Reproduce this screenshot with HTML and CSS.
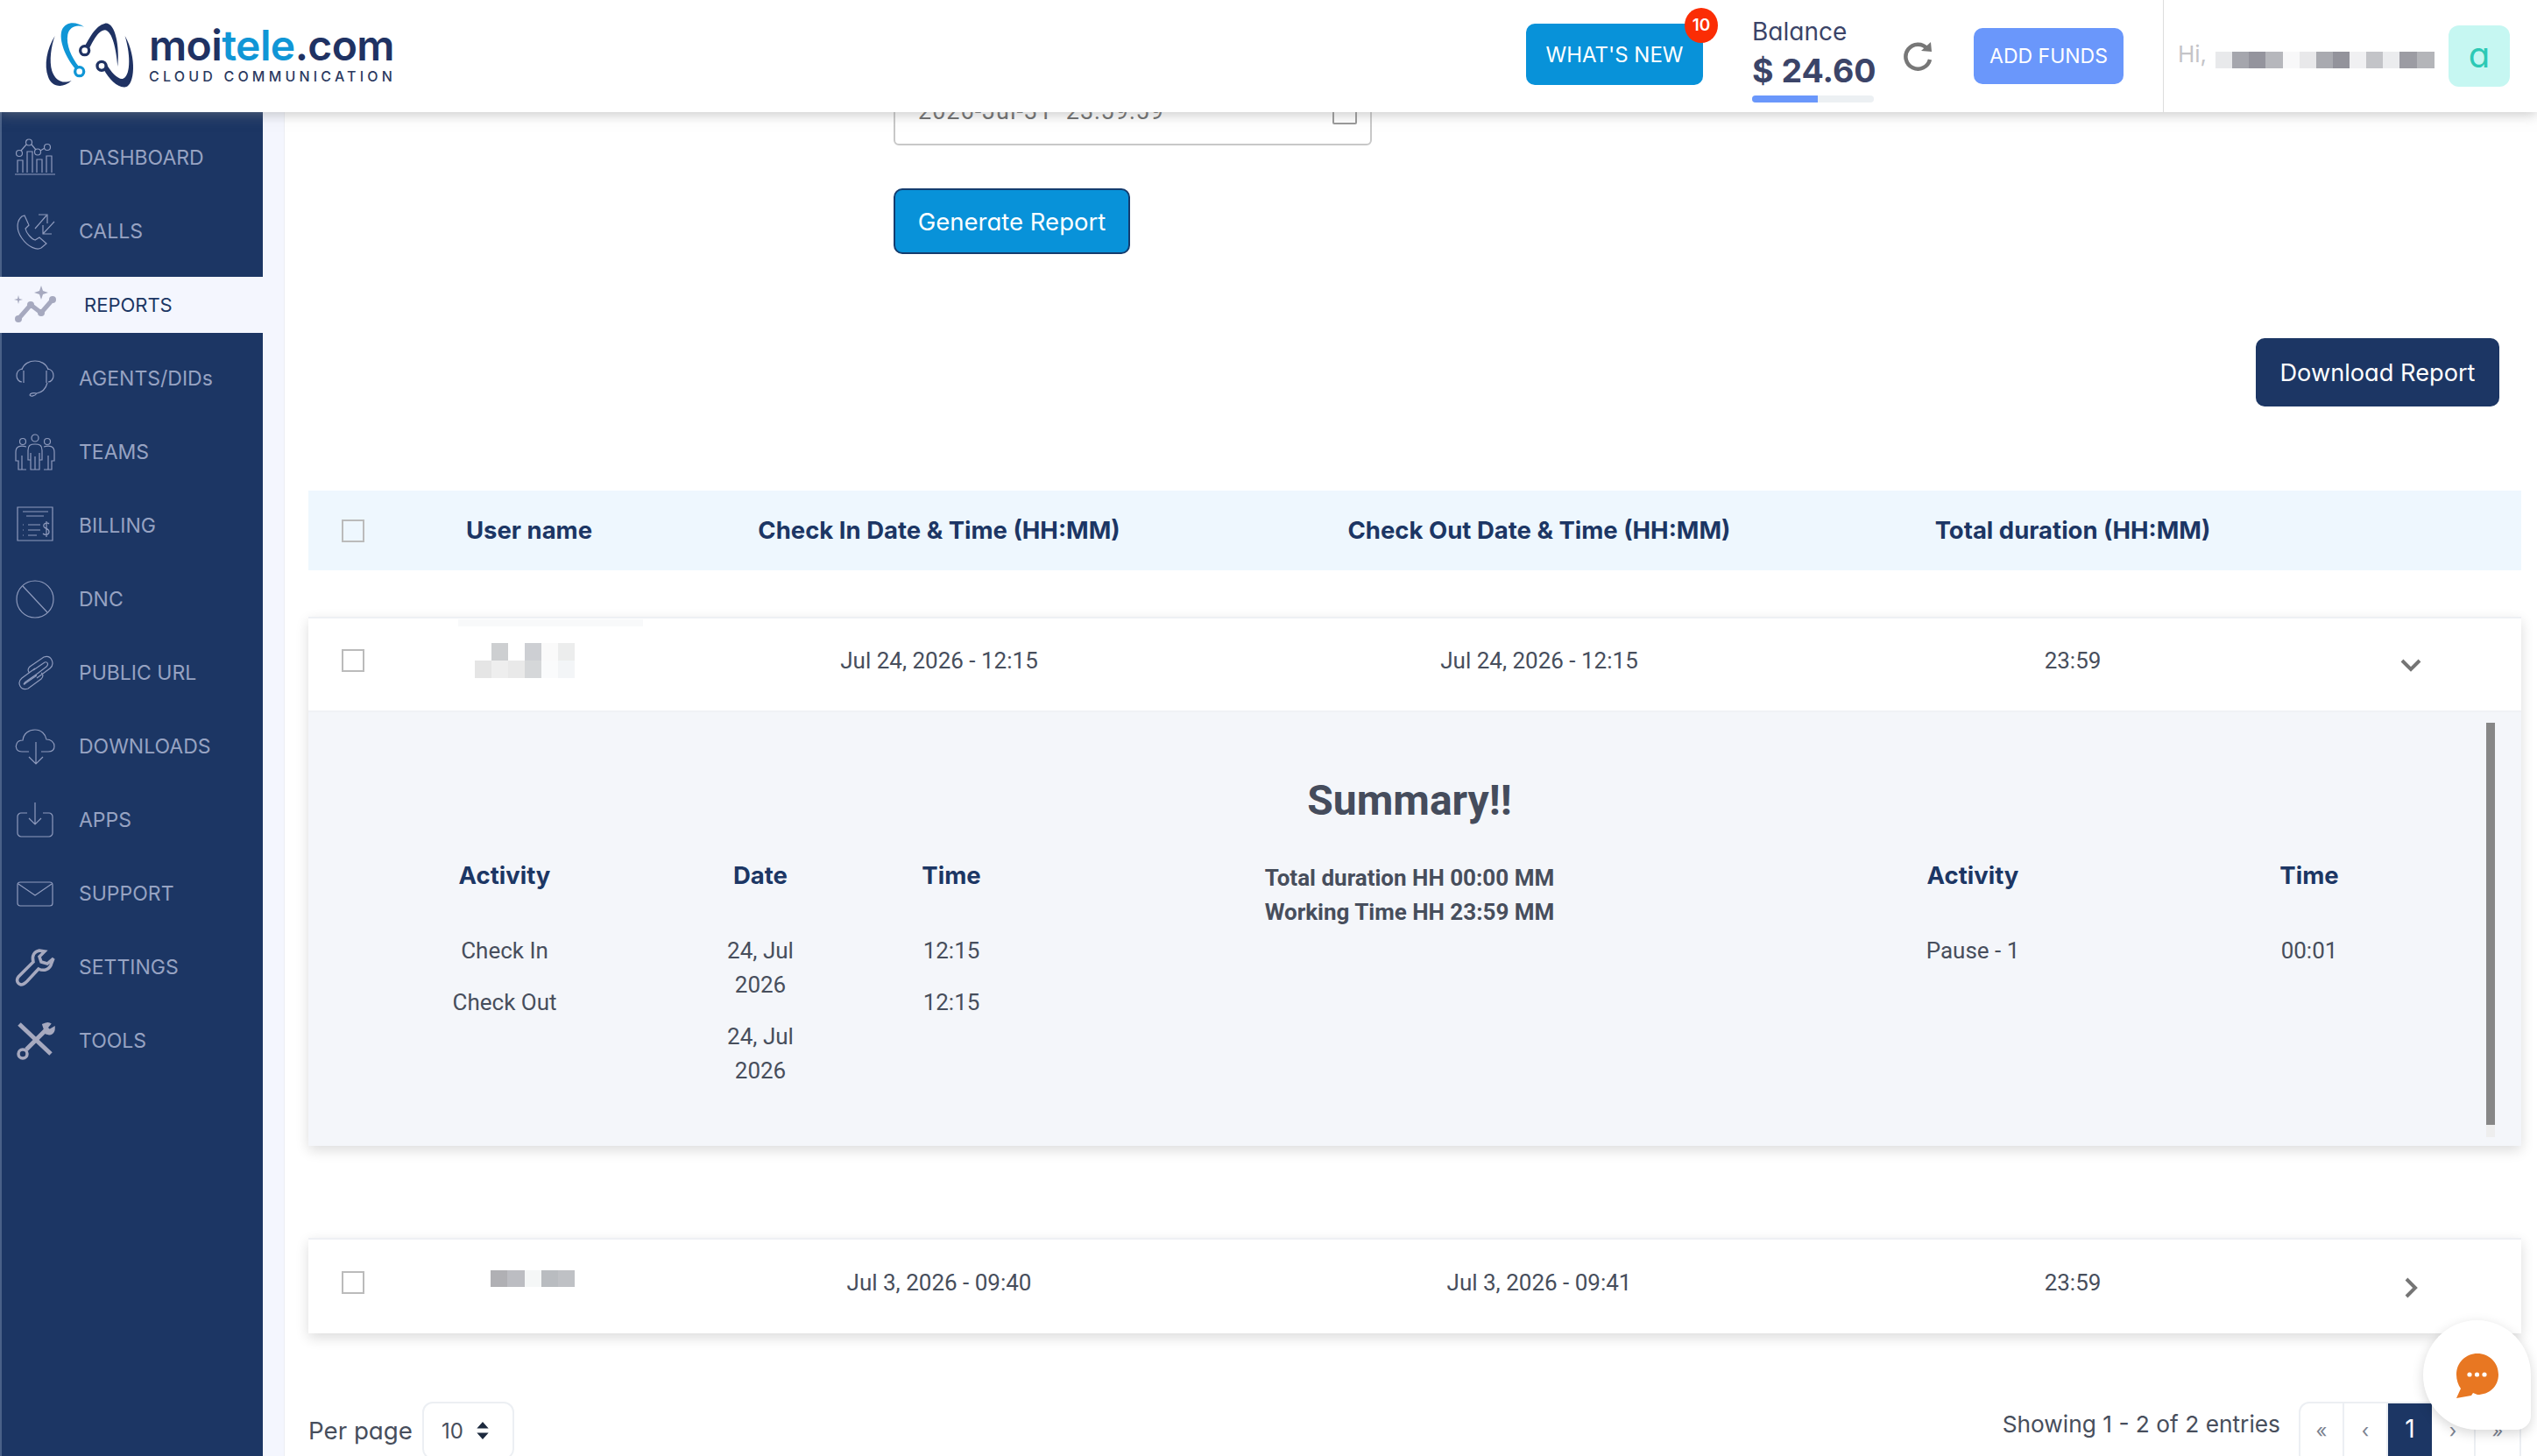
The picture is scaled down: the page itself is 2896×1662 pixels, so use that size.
FILE: index.html
```html
<!DOCTYPE html>
<html lang="en">
<head>
    <meta charset="UTF-8">
    <title>Moitele Reports</title>
    <link rel="stylesheet" href="styles.css">
</head>
<body>
    <header class="topbar">
        <div class="logo">
            <svg class="logo-mark" viewBox="0 0 390 300">
                <path class="navy" d="M68 75C40 120 30 175 45 215C55 245 90 260 125 228C95 240 70 230 58 195C48 160 55 110 68 75Z"/>
                <path class="blue" d="M168 44C140 25 105 25 92 55C80 90 105 150 140 190L150 180C125 150 105 105 112 70C118 45 140 35 168 44Z"/>
                <circle class="ring-blue" cx="152" cy="197" r="15"/>
                <path class="navy" d="M165 120C185 85 205 40 240 32C275 28 290 110 283 180C278 120 265 60 240 55C215 55 195 100 180 130Z"/>
                <circle class="ring-navy" cx="170" cy="125" r="15"/>
                <path class="navy" d="M235 190C255 225 285 255 310 250C340 245 350 150 308 75C330 150 325 215 300 222C285 225 260 200 245 172Z"/>
                <circle class="ring-navy" cx="228" cy="178" r="15"/>
            </svg>
            <div class="logo-text">
                <div class="logo-name">moi<span>tele</span>.com</div>
                <div class="logo-sub">CLOUD COMMUNICATION</div>
            </div>
        </div>
        <button class="btn-new">WHAT'S NEW<span class="badge">10</span></button>
        <div class="balance">
            <div class="balance-label">Balance</div>
            <div class="balance-value">$ 24.60</div>
            <div class="balance-bar"><div class="balance-fill"></div></div>
        </div>
        <svg class="refresh" viewBox="0 0 34 34">
            <path d="M27 8.5A14 14 0 1 0 30 21"/>
            <path class="refresh-head" d="M20 11L32 12L31 1Z"/>
        </svg>
        <button class="btn-funds">ADD FUNDS</button>
        <div class="user">
            <span class="hi">Hi,</span>
            <span class="blur-top"></span>
            <span class="avatar">a</span>
        </div>
    </header>

    <div class="layout">
        <aside class="sidebar">
            <nav class="nav">
                <a class="nav-item">
                    <svg viewBox="0 0 48 44"><path d="M1 41H47M4 39V25H10V39M15 39V15H21V39M26 39V24H32V39M37 39V20H43V39M8 14L14 7M20 7L25 13M30 14L35 11"/><circle cx="6" cy="17" r="3.5"/><circle cx="17" cy="4.5" r="3.5"/><circle cx="27" cy="15.5" r="3.5"/><circle cx="38" cy="10" r="3.5"/></svg>
                    DASHBOARD
                </a>
                <a class="nav-item">
                    <svg viewBox="0 0 48 44"><path d="M9 5C3 10 2 20 9 30C16 40 26 44 31 41L37 36L29 29L24 32C20 31 14 24 13 19L17 15L12 4Z"/><path d="M24 19L37 4M28 3H38V13M46 11L33 25M33 15V25H43"/></svg>
                    CALLS
                </a>
                <a class="nav-item active">
                    <svg class="solid" viewBox="0 0 48 44"><path class="thick" d="M5 38L19 22L31 31L44 16"/><circle cx="5" cy="38" r="4"/><circle cx="19" cy="22" r="4"/><circle cx="31" cy="31" r="4"/><circle cx="44" cy="16" r="4"/><path d="M31 0L33 6L39 8L33 10L31 16L29 10L23 8L29 6ZM5 11L6 15L10 16L6 17L5 21L4 17L0 16L4 15Z"/></svg>
                    REPORTS
                </a>
                <a class="nav-item">
                    <svg viewBox="0 0 48 44"><path d="M9 12C11 5 18 2 24 2C30 2 37 5 39 12M11 13V27M9 11C5 12 3 15 3 19C3 23 6 26 9 26M37 13V27M39 11C43 12 45 15 45 19C45 23 42 26 39 26M38 27C36 35 31 38 26 39C22 38 18 39 18 41C19 43 24 42 26 39"/></svg>
                    AGENTS/DIDs
                </a>
                <a class="nav-item">
                    <svg viewBox="0 0 48 44"><circle cx="24" cy="6" r="4"/><circle cx="10" cy="10" r="3.5"/><circle cx="38" cy="10" r="3.5"/><path d="M16 20C16 14 19 13 24 13C29 13 32 14 32 20V31H29V42H19V31H16ZM24 27V42M14 16C8 14 2 15 2 22V32H5V42H14M34 16C40 14 46 15 46 22V32H43V42H34M9 26V42M39 26V42M19 23V31M29 23V31"/></svg>
                    TEAMS
                </a>
                <a class="nav-item">
                    <svg viewBox="0 0 48 44"><path d="M4 1H44V39H4ZM10 6H39M14 11H34M16 21H30M16 27H30M16 33H26M10 21H11M10 27H11M10 33H11M40 20C38 18 33 19 34 23C35 26 40 25 40 29C40 33 35 33 33 31M37 17V35"/></svg>
                    BILLING
                </a>
                <a class="nav-item">
                    <svg viewBox="0 0 48 44"><circle cx="24" cy="22" r="21"/><path d="M10 7L38 37"/></svg>
                    DNC
                </a>
                <a class="nav-item">
                    <svg viewBox="0 0 48 44"><path d="M24 25L37 15C40 12 38 9 35 10L22 19M26 28L41 17C47 12 43 1 34 4L18 15C15 18 16 21 18 22M24 17L9 28C3 33 7 43 16 40L31 29C34 26 33 23 31 22M26 25L13 34C10 37 11 33 15 31L28 22"/></svg>
                    PUBLIC URL
                </a>
                <a class="nav-item">
                    <svg viewBox="0 0 48 44"><path d="M17 28H9C3 28 1 23 3 19C4 16 7 15 10 15C11 7 17 3 24 3C31 3 36 8 37 14C42 14 46 17 46 22C46 26 43 28 39 28H31M25 17V42M17 34L25 42L33 34"/></svg>
                    DOWNLOADS
                </a>
                <a class="nav-item">
                    <svg viewBox="0 0 48 44"><path d="M15 14H8C6 14 4 16 4 18V37C4 39 6 41 8 41H40C42 41 44 39 44 37V18C44 16 42 14 40 14H33M24 2V26M17 20L24 27L31 20"/></svg>
                    APPS
                </a>
                <a class="nav-item">
                    <svg viewBox="0 0 48 44"><rect x="4" y="9" width="40" height="27" rx="3"/><path d="M5 11L24 24L43 11"/></svg>
                    SUPPORT
                </a>
                <a class="nav-item">
                    <svg class="bold" viewBox="0 0 48 44"><path d="M29 3C23 4 20 9 22 16L5 33C2 37 4 41 8 42C11 42 13 40 15 38L28 24C34 27 41 25 43 17L45 12L38 18L31 16L29 10L35 4Z"/></svg>
                    SETTINGS
                </a>
                <a class="nav-item">
                    <svg class="bold" viewBox="0 0 48 44"><path class="thick" d="M6 3L42 37M39 7L14 32"/><circle cx="10" cy="37" r="5"/><path d="M34 4C38 2 40 3 40 3L36 8L40 11L45 8C45 12 42 15 37 13Z"/></svg>
                    TOOLS
                </a>
            </nav>
        </aside>

        <main class="content">
            <form class="report-form">
                <div class="date-input">
                    <span>2026-Jul-31&nbsp; 23:59:59</span>
                    <span class="date-icon"></span>
                </div>
                <button type="button" class="btn-generate">Generate Report</button>
            </form>

            <div class="download-row">
                <button class="btn-download">Download Report</button>
            </div>

            <div class="grid-row table-head">
                <span class="check"></span>
                <span>User name</span>
                <span>Check In Date &amp; Time (HH:MM)</span>
                <span>Check Out Date &amp; Time (HH:MM)</span>
                <span>Total duration (HH:MM)</span>
            </div>

            <section class="entry">
                <div class="grid-row table-row">
                    <span class="check"></span>
                    <span class="name-a"></span>
                    <span>Jul 24, 2026 - 12:15</span>
                    <span>Jul 24, 2026 - 12:15</span>
                    <span>23:59</span>
                    <svg class="chevron-down" viewBox="0 0 24 15"><path d="M2 2L12 12L22 2"/></svg>
                </div>
                <div class="detail">
                    <h3 class="summary-title">Summary!!</h3>
                    <div class="detail-grid">
                        <div class="detail-col">
                            <h4>Activity</h4>
                            <div class="detail-cells"><div>Check In</div><div>Check Out</div></div>
                        </div>
                        <div class="detail-col">
                            <h4>Date</h4>
                            <div class="detail-cells"><div>24, Jul<br>2026</div><div>24, Jul<br>2026</div></div>
                        </div>
                        <div class="detail-col">
                            <h4>Time</h4>
                            <div class="detail-cells"><div>12:15</div><div>12:15</div></div>
                        </div>
                        <div class="detail-totals">
                            <div>Total duration HH 00:00 MM</div>
                            <div>Working Time HH 23:59 MM</div>
                        </div>
                        <div class="detail-col">
                            <h4>Activity</h4>
                            <div class="detail-cells"><div>Pause - 1</div></div>
                        </div>
                        <div class="detail-col">
                            <h4>Time</h4>
                            <div class="detail-cells"><div>00:01</div></div>
                        </div>
                    </div>
                    <div class="scroll-track"><div class="scroll-thumb"></div></div>
                </div>
            </section>

            <section class="entry entry-closed">
                <div class="grid-row table-row">
                    <span class="check"></span>
                    <span class="name-b"></span>
                    <span>Jul 3, 2026 - 09:40</span>
                    <span>Jul 3, 2026 - 09:41</span>
                    <span>23:59</span>
                    <svg class="chevron-right" viewBox="0 0 15 24"><path d="M2 2L12 12L2 22"/></svg>
                </div>
            </section>

            <div class="table-foot">
                <div class="per-page">
                    Per page
                    <div class="per-select">
                        10
                        <svg viewBox="0 0 16 24"><path d="M8 0L16 9H0ZM8 24L0 15H16Z"/></svg>
                    </div>
                </div>
                <div class="paging">
                    <span class="showing">Showing 1 - 2 of 2 entries</span>
                    <div class="pager">
                        <span>«</span><span>‹</span><span class="current">1</span><span>›</span><span>»</span>
                    </div>
                </div>
            </div>
        </main>
    </div>

    <div class="chat">
        <svg viewBox="0 0 50 52">
            <path class="chat-bubble" d="M25 1C38 1 49 11 49 25C49 39 38 48 25 48L20 46L18 49L1 52L6 41C3 37 1 31 1 25C1 11 12 1 25 1Z"/>
            <circle cx="16" cy="25" r="2.6"/><circle cx="24.500" cy="25" r="2.6"/><circle cx="33" cy="25" r="2.6"/>
        </svg>
    </div>
</body>
</html>
```

FILE: styles.css
```css
* {
    box-sizing: border-box;
}
html, body {
    margin: 0;
    height: 1662px;
    overflow: hidden;
}
body {
    position: relative;
    font-family: Roboto, sans-serif;
    font-size: 26px;
    color: #474e5c;
    background: #fff;
}
button {
    font-family: Inter, sans-serif;
    font-feature-settings: "cv11";
    color: #fff;
    border: 0;
    cursor: pointer;
}

/* top bar */
.topbar {
    position: relative;
    z-index: 5;
    display: flex;
    align-items: center;
    height: 128px;
    background: #fff;
    box-shadow: 0 2px 14px rgba(140, 140, 140, 0.5);
}
.logo {
    display: flex;
    align-items: center;
    margin-left: 40px;
    margin-right: auto;
}
.logo-mark {
    width: 130px;
    height: 100px;
    margin-top: 4px;
}
.navy { fill: #1f3263; }
.blue { fill: #1096d6; }
.ring-navy, .ring-blue {
    fill: #fff;
    stroke-width: 10;
}
.ring-navy { stroke: #1f3263; }
.ring-blue { stroke: #1096d6; }
.logo-text {
    margin-top: -4px;
}
.logo-name {
    font-family: Inter, sans-serif;
    font-size: 48px;
    font-weight: 600;
    line-height: 50px;
    letter-spacing: -0.6px;
    color: #1f3263;
}
.logo-name span {
    color: #1096d6;
}
.logo-sub {
    font-family: Inter, sans-serif;
    font-size: 16px;
    font-weight: 500;
    line-height: 20px;
    letter-spacing: 4.2px;
    color: #2b3a5f;
}
.btn-new {
    position: relative;
    width: 202px;
    height: 70px;
    margin-top: -4px;
    background: #0892d9;
    border-radius: 10px;
    font-size: 24px;
    white-space: nowrap;
}
.badge {
    position: absolute;
    top: -18px;
    right: -17px;
    width: 38px;
    height: 40px;
    border-radius: 50%;
    background: #fb2d05;
    font-size: 19px;
    font-weight: 600;
    line-height: 40px;
    text-align: center;
}
.balance {
    width: 139px;
    margin: 9px 0 0 56px;
    font-family: Inter, sans-serif;
    font-feature-settings: "cv11";
    color: #3b4468;
}
.balance-label {
    font-size: 28px;
    line-height: 32px;
}
.balance-value {
    font-size: 37.5px;
    font-weight: 700;
    line-height: 46px;
    margin-top: 6px;
    white-space: nowrap;
}
.balance-bar {
    height: 8px;
    margin-top: 5px;
    border-radius: 4px;
    background: #ecf0f3;
    overflow: hidden;
}
.balance-fill {
    width: 54%;
    height: 100%;
    background: #6a97fb;
}
.refresh {
    width: 34px;
    height: 34px;
    margin-left: 34px;
    fill: none;
    stroke: #777;
    stroke-width: 4.5;
}
.refresh-head {
    fill: #777;
    stroke: none;
}
.btn-funds {
    width: 171px;
    height: 64px;
    margin-left: 46px;
    background: #6a97fb;
    border-radius: 10px;
    font-size: 23px;
    white-space: nowrap;
}
.user {
    display: flex;
    align-items: center;
    height: 128px;
    margin-left: 45px;
    padding: 0 31px 0 16px;
    border-left: 1px solid #ddd;
    font-family: Inter, sans-serif;
    font-feature-settings: "cv11";
}
.hi {
    color: #c4c4c8;
    font-size: 26px;
    width: 43px;
    margin-top: -6px;
}
.blur-top {
    width: 250px;
    height: 19px;
    margin-top: 9px;
    background: linear-gradient(to right,
        #e8e9eb 0 19px, #a5a6ad 19px 38px, #94949d 38px 57px, #b6b7bc 57px 77px,
        #f8f8f9 77px 96px, #e8e8ea 96px 115px, #a9aab0 115px 134px, #93939b 134px 153px,
        #f0f0f2 153px 172px, #c3c4c8 172px 191px, #ebecee 191px 210px, #9c9ca3 210px 230px,
        #b4b5b9 230px 250px);
}
.avatar {
    width: 70px;
    height: 70px;
    margin-left: 16px;
    border-radius: 12px;
    background: #c6f7f2;
    color: #2cc9b5;
    font-size: 40px;
    line-height: 68px;
    text-align: center;
}

/* sidebar */
.layout {
    display: flex;
    height: 1534px;
}
.sidebar {
    flex: 0 0 325px;
    background: #f4f6fe;
    border-right: 1px solid #eceef4;
}
.nav {
    width: 300px;
    height: 100%;
    padding-top: 10px;
    background: #1c3664;
    border-left: 2px solid #4a6188;
}
.nav-item {
    display: flex;
    align-items: center;
    gap: 26px;
    height: 84px;
    padding-left: 14px;
    font-family: Inter, sans-serif;
    font-size: 23px;
    color: #97a3c2;
    white-space: nowrap;
}
.nav-item svg {
    flex: none;
    width: 48px;
    height: 44px;
    fill: none;
    stroke: #8f9bbd;
    stroke-width: 1.2;
}
.nav-item.active {
    width: 323px;
    height: 64px;
    margin: 10px 0 10px -2px;
    padding-left: 16px;
    gap: 32px;
    font-size: 22px;
    background: #f4f6fe;
    color: #1c3664;
}
.nav-item svg.solid {
    fill: #a6a9bf;
    stroke: none;
}
.nav-item svg.bold {
    stroke: #a6a9bf;
    stroke-width: 3.5;
}
.nav-item svg .thick {
    fill: none;
    stroke: #a6a9bf;
    stroke-width: 5;
}

/* main area */
.content {
    flex: 1;
    min-width: 0;
    padding: 0 18px 0 27px;
}
.report-form {
    width: 546px;
    margin: -40px 0 0 668px;
}
.date-input {
    display: flex;
    align-items: center;
    justify-content: space-between;
    height: 78px;
    padding: 0 15px 0 26px;
    border: 2px solid #c8c8c8;
    border-radius: 6px;
    font-size: 27px;
    color: #6a6a6a;
    letter-spacing: 1px;
}
.date-icon {
    width: 28px;
    height: 30px;
    border: 2px solid #999;
    border-radius: 2px;
}
.btn-generate {
    display: block;
    width: 270px;
    height: 75px;
    margin-top: 49px;
    background: #0892d9;
    border: 2px solid #143c6e;
    border-radius: 10px;
    font-size: 27.5px;
}
.download-row {
    display: flex;
    justify-content: flex-end;
    margin-top: 96px;
    padding-right: 25px;
}
.btn-download {
    width: 278px;
    height: 78px;
    background: #1c3664;
    border-radius: 10px;
    font-size: 27.2px;
}

/* table */
.grid-row {
    display: grid;
    grid-template-columns: 130px 244px 692px 678px 540px 1fr;
    align-items: center;
    justify-items: center;
}
.check {
    justify-self: start;
    width: 26px;
    height: 26px;
    margin-left: 38px;
    border: 2px solid #bbb;
}
.table-head {
    height: 91px;
    margin-top: 96px;
    padding-bottom: 2px;
    background: #eef7fe;
    font-family: Inter, sans-serif;
    font-size: 27.5px;
    font-weight: 700;
    color: #1c3664;
}
.table-head .check {
    margin-top: 2px;
}
.entry {
    margin-top: 53px;
    background: #fff;
    box-shadow: 0 5px 14px rgba(0, 0, 0, 0.14);
}
.entry-closed {
    margin-top: 105px;
}
.table-row {
    height: 109px;
    padding-bottom: 10px;
    border-top: 2px solid #eef0f4;
    border-bottom: 2px solid #f0f2f6;
}
.entry-closed .table-row {
    border-bottom: 0;
}
.name-a {
    position: relative;
    width: 114px;
    height: 40px;
    margin-right: 10px;
    background:
        linear-gradient(to right, transparent 0 19px, #cdcfd1 19px 38px, transparent 38px 57px, #cdcfd3 57px 76px, #fafafa 76px 95px, #eceded 95px 114px) top / 100% 50% no-repeat,
        linear-gradient(to right, #e5e5e5 0 19px, #eeeeee 19px 38px, #e9e9e9 38px 57px, #d5d7d9 57px 76px, #fafbfc 76px 95px, #f3f5f7 95px 114px) bottom / 100% 50% no-repeat;
}
.name-a::before {
    content: "";
    position: absolute;
    left: -19px;
    top: -27px;
    width: 211px;
    height: 8px;
    background: #f8f9fa;
}
.name-b {
    width: 96px;
    height: 19px;
    margin: -9px 0 0 8px;
    background: linear-gradient(to right, #b0b0b4 0 19px, #bcbdc2 19px 39px, #f5f7f7 39px 58px, #b9bcc0 58px 77px, #bfc1c5 77px 96px);
}
.chevron-down, .chevron-right {
    fill: none;
    stroke: #757575;
    stroke-width: 4;
    margin: 12px 10px 0 0;
}
.chevron-down {
    width: 24px;
    height: 15px;
}
.chevron-right {
    width: 15px;
    height: 24px;
}

/* expanded row */
.detail {
    position: relative;
    height: 495px;
    padding: 71px 12px 0 0;
    background: #f4f6fa;
}
.summary-title {
    margin: 0;
    font-size: 48px;
    font-weight: 700;
    line-height: 60px;
    text-align: center;
    color: #454c5c;
}
.detail-grid {
    display: grid;
    grid-template-columns: 272px 312px 124px 922px 364px 404px;
    margin: 36px 0 0 88px;
    text-align: center;
}
.detail-col h4 {
    margin: 0 0 47px;
    font-family: Inter, sans-serif;
    font-size: 27.5px;
    font-weight: 700;
    line-height: 39px;
    color: #1c3664;
}
.detail-cells {
    display: flex;
    flex-direction: column;
    gap: 20px;
    line-height: 39px;
}
.detail-totals {
    padding-top: 3px;
    font-weight: 700;
    line-height: 39px;
}
.scroll-track {
    position: absolute;
    top: 12px;
    right: 30px;
    width: 10px;
    height: 473px;
    background: #eee;
}
.scroll-thumb {
    height: 459px;
    background: #878787;
}

/* footer */
.table-foot {
    display: flex;
    justify-content: space-between;
    align-items: flex-start;
    margin-top: 78px;
    font-family: Inter, sans-serif;
    font-feature-settings: "cv11";
}
.per-page {
    display: flex;
    align-items: center;
    gap: 11px;
    font-size: 27.7px;
    height: 66px;
}
.per-select {
    display: flex;
    align-items: center;
    gap: 14px;
    width: 105px;
    height: 66px;
    padding-left: 20px;
    border: 2px solid #eceff3;
    border-radius: 12px;
    font-size: 24px;
}
.per-select svg {
    width: 16px;
    height: 20px;
    fill: #1d2a3e;
}
.paging {
    display: flex;
    align-items: flex-start;
    gap: 21px;
}
.showing {
    font-size: 26.3px;
    line-height: 52px;
}
.pager {
    display: flex;
    height: 72px;
    border: 2px solid #eceff3;
    border-radius: 12px;
    overflow: hidden;
}
.pager span {
    width: 50px;
    padding-top: 18px;
    text-align: center;
    font-size: 22px;
    color: #7b8290;
    border-right: 2px solid #eceff3;
}
.pager .current {
    padding-top: 12px;
    background: #1c3664;
    color: #fff;
    font-size: 28px;
    border: 0;
}
.pager span:last-child {
    border-right: 0;
}

/* chat button */
.chat {
    position: absolute;
    right: 7px;
    bottom: 30px;
    z-index: 6;
    display: flex;
    align-items: center;
    justify-content: center;
    width: 123px;
    height: 125px;
    border-radius: 50% 50% 16px 50%;
    background: #fff;
    box-shadow: 0 4px 14px rgba(0, 0, 0, 0.16);
}
.chat svg {
    width: 50px;
    height: 52px;
    fill: #fff;
}
.chat-bubble {
    fill: #e87722;
}
```
